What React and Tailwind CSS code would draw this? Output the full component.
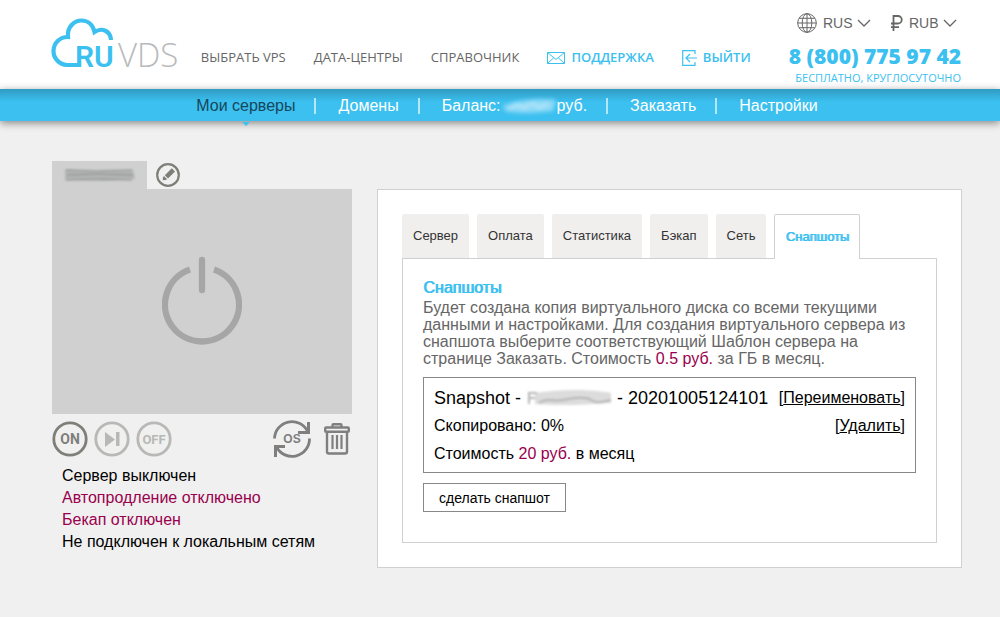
import React, { useState } from "react";

const tabs = ["Сервер", "Оплата", "Статистика", "Бэкап", "Сеть", "Снапшоты"];

function Logo() {
    return (
        <a href="#" aria-label="RUVDS" className="block shrink-0">
            <svg width="136" height="62" viewBox="0 0 136 62">
                <path
                    d="M28 47H16A14 14 0 0 1 17 19C16 9 23 2.500 30.500 2.500C37 2.500 42 7 43.500 14C51 9 59.500 13 60 22"
                    fill="none"
                    stroke="#3bc0f0"
                    strokeWidth="4.200"
                />
                <text x="24" y="48.800" fill="#3bc0f0" fontFamily="Roboto, sans-serif" fontWeight="600" fontSize="30">RU</text>
                <text x="67" y="48.800" fill="#b8babc" fontFamily="Open Sans, sans-serif" fontWeight="300" fontSize="33">VDS</text>
            </svg>
        </a>
    );
}

function Chevron() {
    return (
        <svg width="14" height="8" viewBox="0 0 14 8" className="pointer-events-none" fill="none" stroke="#666" strokeWidth="1.300">
            <path d="M1 1l6 6 6-6" />
        </svg>
    );
}

function GlobeIcon() {
    return (
        <svg width="20" height="20" viewBox="0 0 20 20" fill="none" stroke="#666">
            <circle cx="10" cy="10" r="9.300" />
            <ellipse cx="10" cy="10" rx="4.800" ry="9.300" />
            <path d="M10 .7v18.600M.7 10h18.600M2.200 5.300h15.600M2.200 14.700h15.600" />
        </svg>
    );
}

function RubleIcon() {
    return (
        <svg width="12" height="16" viewBox="0 0 12 16" fill="none" stroke="#666" strokeWidth="1.800">
            <path d="M2.500 16V1h4.500a3.700 3.700 0 0 1 0 7.500H0M0 12.200h8" />
        </svg>
    );
}

function MailIcon() {
    return (
        <svg width="18" height="12" viewBox="0 0 18 12" fill="none" stroke="#3bc0f0">
            <path d="M.5.5h17v11H.5zM.5.5L9 7.500 17.500.5M.5 11.500l6.300-5.800M17.500 11.500l-6.300-5.800" />
        </svg>
    );
}

function ExitIcon() {
    return (
        <svg width="15" height="16" viewBox="0 0 15 16" fill="none" stroke="#3bc0f0" strokeWidth="1.200">
            <path d="M13 4V.7H.7v14.600H13V12M15 8H4M8 4L4 8l4 4" />
        </svg>
    );
}

function Header() {
    return (
        <header className="flex h-[89px] items-start bg-white pl-[51px] pr-[39px] font-['Open_Sans',sans-serif]">
            <div className="pt-[18px]">
                <Logo />
            </div>
            <nav className="mt-12 mr-[38px] ml-auto flex h-5 items-center gap-7 whitespace-nowrap text-[13px] text-[#666]">
                <a href="#">ВЫБРАТЬ VPS</a>
                <a href="#">ДАТА-ЦЕНТРЫ</a>
                <a href="#">СПРАВОЧНИК</a>
                <a href="#" className="flex items-center gap-[6px] font-semibold text-[#3bc0f0]">
                    <MailIcon />
                    ПОДДЕРЖКА
                </a>
                <a href="#" className="flex items-center gap-[6px] font-semibold text-[#3bc0f0]">
                    <ExitIcon />
                    ВЫЙТИ
                </a>
            </nav>
            <div className="flex flex-col items-end whitespace-nowrap pt-[13px] text-[#3bc0f0]">
                <div className="flex h-5 items-center gap-5 pr-1 font-['Liberation_Sans',sans-serif] text-sm text-[#666]">
                    <div className="flex items-center gap-1">
                        <GlobeIcon />
                        <select aria-label="Язык" className="ml-[2px] appearance-none bg-transparent">
                            <option>RUS</option>
                        </select>
                        <Chevron />
                    </div>
                    <div className="flex items-center gap-1">
                        <RubleIcon />
                        <select aria-label="Валюта" className="ml-[2px] appearance-none bg-transparent">
                            <option>RUB</option>
                        </select>
                        <Chevron />
                    </div>
                </div>
                <a href="tel:88007759742" className="mt-[9px] text-[21px] leading-7 font-extrabold">8 (800) 775 97 42</a>
                <span className="text-[11px] leading-4 font-medium">БЕСПЛАТНО, КРУГЛОСУТОЧНО</span>
            </div>
        </header>
    );
}

function Separator() {
    return <span className="ml-[19px] mr-[22px] h-4 w-[2px] bg-[#b5e6fa]" />;
}

function SubNav() {
    return (
        <nav className="flex h-8 items-center justify-center bg-[#3bc0f0] bg-linear-to-b from-[#319bc1] to-[#3bc0f0] to-40% pt-[2px] pl-[52px] pr-[38px] text-base whitespace-nowrap text-white shadow-[0_2px_8px_rgba(0,0,0,0.45)]">
            <a href="#" className="relative text-[#17475a]">
                Мои серверы
                <span className="absolute top-full left-1/2 mt-1 -translate-x-1/2 border-x-4 border-t-4 border-x-transparent border-t-[#3bc0f0]" />
            </a>
            <Separator />
            <a href="#">Домены</a>
            <Separator />
            <a href="#" className="flex items-center">
                Баланс:
                <svg width="56" height="18" viewBox="2 0 56 18" className="blur-[2px]">
                    <path d="M4 9C18 3 40 1 57 3l-3 11C38 16 20 17 6 14z" fill="#8fd9f7" />
                    <path d="M10 12l8-5 7 4 8-5 8 5 8-5" stroke="#c5ecfb" strokeWidth="2" fill="none" />
                </svg>
                руб.
            </a>
            <Separator />
            <a href="#">Заказать</a>
            <Separator />
            <a href="#">Настройки</a>
        </nav>
    );
}

function RoundButton({ label, color, children }) {
    return (
        <button aria-label={label}>
            <svg width="36" height="36" viewBox="0 0 36 36" style={{ color }}>
                <circle cx="18" cy="18" r="16.200" fill="none" stroke="currentColor" strokeWidth="2.800" />
                {children}
            </svg>
        </button>
    );
}

function ServerPanel() {
    return (
        <section className="w-[300px] shrink-0">
            <div className="flex h-7 items-center">
                <div className="flex h-7 w-[95px] items-center justify-center bg-[#d0d0d0]">
                    <svg width="74" height="16" viewBox="0 0 74 16" className="blur-[1px]">
                        <path d="M2 2L30 4 70 3l2 9-30 2L2 13z" fill="#b4b5b5" />
                        <path d="M3 3l30 1 36-1M4 8l30-1 36 1M3 13l32-1 34 1" stroke="#8a8b8b" fill="none" />
                    </svg>
                </div>
                <button aria-label="Изменить имя" className="ml-[9px]">
                    <svg width="24" height="24" viewBox="0 0 24 24">
                        <circle cx="12" cy="12" r="10.800" fill="none" stroke="#7f7f7a" strokeWidth="2.200" />
                        <path d="M15.800 5.200l3.200 3.200-7 7-3.200-3.200zM8 13l3.200 3.200-1.700.8-2.800.3.200-2.700z" fill="#7f7f7a" />
                    </svg>
                </button>
            </div>
            <div className="flex h-[225px] items-center justify-center bg-[#d0d0d0]">
                <svg width="80" height="92" viewBox="0 0 80 92" fill="none" stroke="#a6a6a6">
                    <path d="M28 13.500A37 37 0 1 0 52 13.500" strokeWidth="6.300" />
                    <path d="M40 4v30" strokeWidth="6.300" strokeLinecap="round" />
                </svg>
            </div>
            <div className="mt-[5px] flex h-10 items-center">
                <div className="flex gap-[6px]">
                    <RoundButton label="Включить" color="#7f7f7a">
                        <text x="18" y="23" textAnchor="middle" fill="currentColor" fontSize="14" fontWeight="700" fontFamily="Roboto, sans-serif">ON</text>
                    </RoundButton>
                    <RoundButton label="Перезагрузить" color="#b8b8b6">
                        <path d="M11 11l10 7.500L11 26zM22 11h3.500v14H22z" fill="currentColor" />
                    </RoundButton>
                    <RoundButton label="Выключить" color="#b8b8b6">
                        <text x="18" y="23" textAnchor="middle" fill="currentColor" fontSize="13" fontWeight="700" fontFamily="Roboto, sans-serif">OFF</text>
                    </RoundButton>
                </div>
                <button aria-label="Переустановить ОС" className="ml-auto">
                    <svg width="40" height="40" viewBox="0 0 40 40" fill="none" stroke="#7f7f7f" strokeWidth="2.800">
                        <path d="M2.500 19.500A17.500 17.500 0 0 1 35.500 12M37.500 19.500A17.500 17.500 0 0 1 4.500 28" />
                        <path d="M36.500 3v10.500H26M3.500 38V27.500H13" strokeWidth="3" />
                        <text x="20" y="24" textAnchor="middle" fill="#7f7f7f" stroke="none" fontSize="12" fontWeight="700" fontFamily="Liberation Sans, sans-serif">OS</text>
                    </svg>
                </button>
                <button aria-label="Удалить сервер" className="ml-3 mr-[2px]">
                    <svg width="26" height="32" viewBox="0 0 26 32" fill="none" stroke="#7f7f7f" strokeWidth="2.400">
                        <path d="M8.500 4.500V2.200a1 1 0 0 1 1-1h7a1 1 0 0 1 1 1v2.300" />
                        <rect x="1.200" y="4.500" width="23.600" height="4.300" rx="1" />
                        <path d="M3 9v19.500a2 2 0 0 0 2 2h16a2 2 0 0 0 2-2V9" />
                        <path d="M8.500 12v14M13 12v14M17.500 12v14" strokeWidth="2.200" />
                    </svg>
                </button>
            </div>
            <div className="mt-[6px] pl-[10px] text-base leading-[22px] text-black">
                <p>Сервер выключен</p>
                <p className="text-[#99004d]">Автопродление отключено</p>
                <p className="text-[#99004d]">Бекап отключен</p>
                <p>Не подключен к локальным сетям</p>
            </div>
        </section>
    );
}

function Snapshots() {
    return (
        <div className="-mt-px border border-[#d0d0d0] px-5 pt-5 pb-[30px]">
            <h2 className="text-base leading-[18px] text-[#3bc0f0] [text-shadow:1px_0_0_#3bc0f0]">Снапшоты</h2>
            <p className="mt-[2px] text-base leading-[17px] text-[#666]">
                Будет создана копия виртуального диска со всеми текущими данными и настройками. Для создания виртуального сервера из
                снапшота выберите соответствующий Шаблон сервера на странице Заказать. Стоимость{" "}
                <span className="text-[#99004d]">0.5 руб.</span> за ГБ в месяц.
            </p>
            <div className="mt-[10px] flex justify-between border border-[#888] px-[10px] pt-[6px] pb-1 whitespace-nowrap text-black">
                <div className="text-base leading-7">
                    <p className="flex items-center text-lg leading-7">
                        Snapshot -
                        <svg width="96" height="18" viewBox="0 0 96 18" className="blur-[1px]">
                            <path d="M14 4C40 0 70 0 90 4v10C60 16 35 17 14 15z" fill="#dcdcdc" />
                            <path d="M8 15V4h8M8 9h6M18 14c10-6 14-1 24-3s22-4 28 0 10 2 20 0" stroke="#b5b5b5" strokeWidth="2" fill="none" />
                        </svg>
                        - 20201005124101
                    </p>
                    <p>Скопировано: 0%</p>
                    <p>
                        Стоимость <span className="text-[#99004d]">20 руб.</span> в месяц
                    </p>
                </div>
                <div className="flex flex-col items-end text-base leading-7">
                    <span>[<button className="underline">Переименовать</button>]</span>
                    <span>[<button className="underline">Удалить</button>]</span>
                </div>
            </div>
            <button className="mt-[10px] h-[29px] border border-[#888] px-[15px] text-sm text-black">сделать снапшот</button>
        </div>
    );
}

export default function App() {
    const [active, setActive] = useState("Снапшоты");

    return (
        <div className="min-h-screen bg-[#f0f0f0] font-['Liberation_Sans',sans-serif]">
            <Header />
            <SubNav />
            <main className="flex items-start gap-[25px] pt-10 pr-[38px] pb-12 pl-[52px]">
                <ServerPanel />
                <section className="mt-7 min-w-0 grow border border-[#d0d0d0] bg-white p-6">
                    <div role="tablist" className="flex gap-2 text-[13px] whitespace-nowrap">
                        {tabs.map(tab => (
                            <button
                                key={tab}
                                role="tab"
                                aria-selected={tab === active}
                                onClick={() => setActive(tab)}
                                className={
                                    tab === active
                                        ? "relative h-[45px] rounded-t-xs border border-b-0 border-[#d0d0d0] bg-white px-[10px] text-[#3bc0f0] [text-shadow:1px_0_0_#3bc0f0]"
                                        : "h-11 rounded-t-xs bg-[#f0efee] px-[11px] text-[#333]"
                                }
                            >
                                {tab}
                            </button>
                        ))}
                    </div>
                    <Snapshots />
                </section>
            </main>
        </div>
    );
}
